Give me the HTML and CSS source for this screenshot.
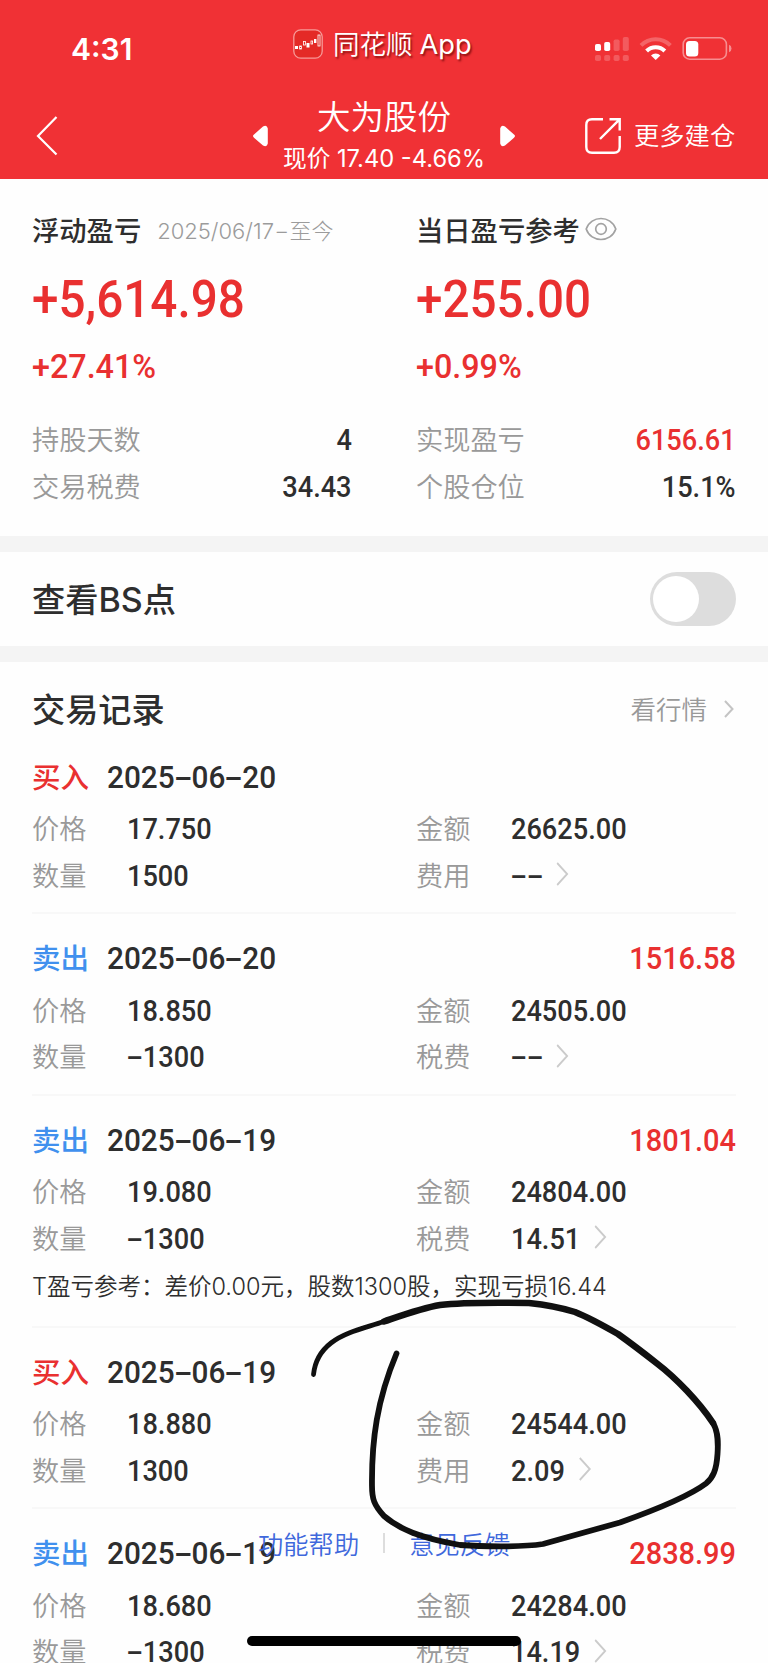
FILE: index.html
```html
<!DOCTYPE html>
<html lang="zh-CN">
<head>
<meta charset="utf-8">
<title>大为股份</title>
<link rel="stylesheet" href="styles.css">
</head>
<body>
<div class="screen">
  <header class="top">
    <div class="status">
      <div class="clock">4:31</div>
      <div class="brand">
        <svg class="brand-icon" viewBox="0 0 30 30"><rect x=".8" y=".8" width="28.4" height="28.4" rx="7" fill="#e42a26" stroke="#f79a98" stroke-width="1.3"/><g fill="#fff"><rect x="2" y="17" width="3" height="3"/><rect x="13.5" y="14" width="3" height="4.5"/><rect x="21" y="10" width="2.4" height="4"/></g><g fill="none" stroke="#fff" stroke-width=".8"><rect x="6.6" y="17" width="1.8" height="3"/><rect x="10.5" y="12.5" width="2" height="3.5"/><rect x="18" y="12" width="1.6" height="3"/><rect x="25" y="6" width="2" height="11"/></g></svg>
        <span>同花顺<span class="latin">App</span></span>
      </div>
      <svg class="signals" viewBox="0 0 138 28"><g fill="#fff"><rect x="0" y="9" width="6" height="7" rx="1.8"/><rect x="9.2" y="7" width="6" height="9" rx="1.8"/><g opacity=".2"><rect x="18.6" y="4.500" width="6" height="11.500" rx="1.800"/><rect x="27.800" y="2" width="6" height="14" rx="1.800"/><rect x="0" y="20" width="6" height="6" rx="1.800"/><rect x="9.200" y="20" width="6" height="6" rx="1.800"/><rect x="18.600" y="20" width="6" height="6" rx="1.800"/><rect x="27.800" y="20" width="6" height="6" rx="1.800"/></g><path d="M60.700 25 L56 20.400 A6.600 6.600 0 0 1 65.400 20.400Z"/></g><g fill="none" stroke="#fff" stroke-width="4"><path d="M51.600 16 A12.800 12.800 0 0 1 69.800 16"/><path d="M46 10.300 A20.600 20.600 0 0 1 75.400 10.300" opacity=".25"/></g><rect x="88.200" y="2.800" width="43.200" height="21.400" rx="6.500" fill="none" stroke="#fff" stroke-opacity=".45" stroke-width="1.600"/><rect x="91" y="6" width="12.300" height="15.500" rx="3.500" fill="#fff"/><path d="M134 9.800 Q136.500 10.500 136.500 13.500 T134 17.300Z" fill="#fff" opacity=".45"/></svg>
    </div>
    <nav class="nav">
      <svg class="back" viewBox="0 0 22 40"><path d="M20.500 1 L2 20 L20.500 38.500" fill="none" stroke="#fff" stroke-width="2.200"/></svg>
      <div class="stock">
        <svg class="tri" viewBox="0 0 16 22"><path d="M2 9.500 L11 1.500 Q15 -.5 15.800 3.500 V18.500 Q15 22.500 11 20.500 L2 12.800 Q0 11 2 9.500Z" fill="#fff"/></svg>
        <div class="stock-text">
          <div class="stock-name">大为股份</div>
          <div class="stock-price">现价 17.40 -4.66%</div>
        </div>
        <svg class="tri" viewBox="0 0 16 22"><path d="M14 9.500 L5 1.500 Q1 -.5 .2 3.500 V18.500 Q1 22.500 5 20.500 L14 12.800 Q16 11 14 9.500Z" fill="#fff"/></svg>
      </div>
      <div class="more">
        <svg viewBox="0 0 36 36"><g fill="none" stroke="#fff" stroke-width="2.400"><path d="M18 1.300 H7 Q1.300 1.300 1.300 7 V29 Q1.300 34.700 7 34.700 H29 Q34.700 34.700 34.700 29 V18"/><path d="M24.500 1.300 H34.700 V12.500 M34.300 1.700 L15 21"/></g></svg>
        <span>更多建仓</span>
      </div>
    </nav>
  </header>

  <section class="summary">
    <div class="card">
      <div class="card-head"><b class="title">浮动盈亏</b><span class="range">2025/06/17<span class="dash">-</span>至今</span></div>
      <div class="big num">+5,614.98</div>
      <div class="pct num">+27.41%</div>
      <div class="stat"><span class="label">持股天数</span><span class="num">4</span></div>
      <div class="stat"><span class="label">交易税费</span><span class="num">34.43</span></div>
    </div>
    <div class="card">
      <div class="card-head"><b class="title">当日盈亏参考</b><svg class="eye" viewBox="0 0 32 24"><path d="M1.200 12 C6 -2 26 -2 30.800 12 C26 26 6 26 1.200 12Z" fill="none" stroke="#a2a2a2" stroke-width="1.700"/><circle cx="16" cy="12" r="5.300" fill="none" stroke="#a2a2a2" stroke-width="1.700"/></svg></div>
      <div class="big num">+255.00</div>
      <div class="pct num">+0.99%</div>
      <div class="stat"><span class="label">实现盈亏</span><span class="num red">6156.61</span></div>
      <div class="stat"><span class="label">个股仓位</span><span class="num">15.1%</span></div>
    </div>
  </section>

  <section class="bs"><span class="heading">查看<span class="latin">BS</span>点</span><span class="switch"><i></i></span></section>

  <section class="records">
    <div class="records-head"><span class="heading">交易记录</span><span class="quote"><span class="label">看行情</span><svg viewBox="0 0 10 18"><path d="M1 1 L8.500 9 L1 17"/></svg></span></div>

    <article class="record">
      <div class="record-head"><span class="side buy">买入</span><span class="num date">2025<i class="dash">-</i>06<i class="dash">-</i>20</span></div>
      <div class="row"><span class="label">价格</span><span class="num">17.750</span><span class="label">金额</span><span class="num">26625.00</span></div>
      <div class="row"><span class="label">数量</span><span class="num">1500</span><span class="label">费用</span><span class="num"><i class="dash">-</i><i class="dash">-</i><svg class="chev" viewBox="0 0 14 24"><path d="M1 1 L12 12 L1 23"/></svg></span></div>
    </article>
    <article class="record">
      <div class="record-head"><span class="side sell">卖出</span><span class="num date">2025<i class="dash">-</i>06<i class="dash">-</i>20</span><span class="num gain">1516.58</span></div>
      <div class="row"><span class="label">价格</span><span class="num">18.850</span><span class="label">金额</span><span class="num">24505.00</span></div>
      <div class="row"><span class="label">数量</span><span class="num"><i class="dash">-</i>1300</span><span class="label">税费</span><span class="num"><i class="dash">-</i><i class="dash">-</i><svg class="chev" viewBox="0 0 14 24"><path d="M1 1 L12 12 L1 23"/></svg></span></div>
    </article>
    <article class="record">
      <div class="record-head"><span class="side sell">卖出</span><span class="num date">2025<i class="dash">-</i>06<i class="dash">-</i>19</span><span class="num gain">1801.04</span></div>
      <div class="row"><span class="label">价格</span><span class="num">19.080</span><span class="label">金额</span><span class="num">24804.00</span></div>
      <div class="row"><span class="label">数量</span><span class="num"><i class="dash">-</i>1300</span><span class="label">税费</span><span class="num">14.51<svg class="chev" viewBox="0 0 14 24"><path d="M1 1 L12 12 L1 23"/></svg></span></div>
      <p class="note">T盈亏参考：差价0.00元，股数1300股，实现亏损16.44</p>
    </article>
    <article class="record">
      <div class="record-head"><span class="side buy">买入</span><span class="num date">2025<i class="dash">-</i>06<i class="dash">-</i>19</span></div>
      <div class="row"><span class="label">价格</span><span class="num">18.880</span><span class="label">金额</span><span class="num">24544.00</span></div>
      <div class="row"><span class="label">数量</span><span class="num">1300</span><span class="label">费用</span><span class="num">2.09<svg class="chev" viewBox="0 0 14 24"><path d="M1 1 L12 12 L1 23"/></svg></span></div>
    </article>
    <article class="record">
      <div class="record-head"><span class="side sell">卖出</span><span class="num date">2025<i class="dash">-</i>06<i class="dash">-</i>19</span><span class="num gain">2838.99</span></div>
      <div class="row"><span class="label">价格</span><span class="num">18.680</span><span class="label">金额</span><span class="num">24284.00</span></div>
      <div class="row"><span class="label">数量</span><span class="num"><i class="dash">-</i>1300</span><span class="label">税费</span><span class="num">14.19<svg class="chev" viewBox="0 0 14 24"><path d="M1 1 L12 12 L1 23"/></svg></span></div>
    </article>
  </section>

  <div class="help"><span>功能帮助</span><i></i><span>意见反馈</span></div>
  <svg class="ink" viewBox="0 0 768 1663"><g fill="none" stroke="#101010" stroke-linecap="round" stroke-linejoin="round"><path stroke-width="4.800" d="M313.500 1374.500 C315 1360 322 1350 331 1343 C345 1332 365 1328 384 1321.500"/><path stroke-width="6.500" d="M384 1321.500 C403 1315 422 1308 440 1305 C465 1302 500 1302.500 529 1303 C548 1305 562 1308 575 1312 C590 1318 604 1326 618 1334 C632 1344 645 1354 657 1363.500 C676 1378 699 1402 713 1423"/><path stroke-width="5.800" d="M713 1423 C719 1433 718 1446 717.500 1454 C716.500 1470 713 1478 706 1483.500 C688 1497 655 1510 620 1522.500 L543 1544 C520 1547.500 480 1546.500 460 1545 C420 1538 399 1529 384 1516 C374 1505 372 1499 372 1486 C371.500 1440 377 1400 396.500 1353.500"/></g></svg>
  <div class="home"></div>
</div>
</body>
</html>
```
FILE: styles.css
```css
* { box-sizing: border-box; }
body { margin: 0; background: #fff; }
.screen {
  position: relative;
  width: 768px;
  height: 1663px;
  overflow: hidden;
  background: #fefefe;
  color: #2e2e2e;
  font-family: Inter, "Noto Sans CJK SC", sans-serif;
  font-weight: 400;
}
svg { display: block; flex: none; }
i { font-style: normal; }

.top { height: 179px; background: #f03135; color: #fff; font-weight: 350; }
.status { display: grid; grid-template-columns: 293px 302px 1fr; height: 94px; align-items: start; }
.clock { padding: 31px 0 0 71px; font-size: 30px; line-height: 36px; font-weight: 600; }
.brand { display: flex; gap: 10px; padding-top: 26px; font-size: 26.500px; line-height: 37px; text-shadow: 1.5px 1.5px 2px rgba(90, 0, 0, .65); white-space: nowrap; }
.brand-icon { width: 30px; height: 30px; margin-top: 3px; }
.brand .latin { margin-left: 7px; font-size: 27.200px; font-weight: 400; }
.signals { width: 138px; height: 28px; margin-top: 35px; }

.nav { display: grid; grid-template-columns: 252px 264px 1fr; height: 85px; }
.back { width: 22px; height: 40px; margin: 22px 0 0 35.500px; }
.stock { display: flex; justify-content: space-between; }
.tri { width: 16px; height: 22px; margin-top: 31px; }
.stock-text { text-align: center; white-space: nowrap; }
.stock-name { font-size: 33.500px; line-height: 46px; }
.stock-price { font-size: 23.700px; line-height: 37px; font-weight: 400; }
.more { display: flex; gap: 13px; padding: 24px 0 0 69px; font-size: 25.300px; line-height: 36px; white-space: nowrap; }
.more svg { width: 36px; height: 36px; }

.num {
  font-family: Roboto, "Noto Sans CJK SC", sans-serif;
  font-weight: 500;
  font-size: 30px;
  color: #2e2e2e;
  white-space: nowrap;
  transform: scaleX(.905);
  transform-origin: left center;
}
.dash { display: inline-block; width: 17.500px; text-align: center; transform: scaleX(1.850); }

.summary { display: grid; grid-template-columns: 352px 320px; column-gap: 32px; padding: 27px 32px 0; height: 357px; }
.card { width: 320px; }
.card-head { display: flex; align-items: center; height: 46px; white-space: nowrap; }
.title { font-size: 27.300px; font-weight: 500; }
.range { margin-left: 16px; padding-bottom: 1px; font-size: 22px; color: #9b9b9b; font-weight: 300; }
.range .dash { width: 15.500px; transform: scaleX(1.500); }
.eye { width: 32px; height: 24px; margin-left: 5px; }
.big { font-size: 51.500px; line-height: 60px; margin-top: 18px; color: #e93030; transform: scaleX(.925); }
.pct { font-size: 34px; line-height: 40px; margin-top: 16px; color: #e93030; transform: scaleX(.950); }
.stat { display: flex; justify-content: space-between; align-items: center; height: 46.500px; font-size: 27.200px; }
.stat .num { transform-origin: right center; }
.pct + .stat { margin-top: 30.500px; }
.label { color: #999; font-weight: 350; padding-bottom: 3px; }
.num.red { color: #e93030; }

.bs { display: flex; justify-content: space-between; align-items: center; height: 126px; padding: 0 32px; border: solid #f4f4f4; border-width: 16px 0; }
.heading { padding-bottom: 4px; font-size: 33.200px; font-weight: 500; color: #2e2e2e; }
.heading .latin { font-size: 34px; font-weight: 450; }
.switch { width: 86px; height: 54px; padding: 4px 3px; border-radius: 27px; background: #ddd; }
.switch i { display: block; width: 46px; height: 46px; border-radius: 50%; background: #fff; }

.records { padding: 0 32px; }
.records-head { display: flex; justify-content: space-between; align-items: center; height: 68.500px; padding-top: 26px; }
.quote { display: flex; align-items: center; gap: 17px; font-size: 25.500px; padding-right: 2px; }
.quote svg { width: 10px; height: 18px; fill: none; stroke: #c4c4c4; stroke-width: 2; }
.record { padding-bottom: 13.500px; border-top: 2px solid #f8f8f8; }
.records-head + .record { border-color: transparent; }
.record-head { display: flex; align-items: center; height: 73px; padding-top: 15px; }
.side { width: 75px; padding-bottom: 3px; font-size: 28.500px; font-weight: 500; }
.side.buy { color: #e93030; }
.side.sell { color: #4090ee; }
.date { font-size: 32px; transform: scaleX(.930); }
.date .dash { width: 18.200px; }
.gain { margin-left: auto; font-size: 32px; color: #e93030; transform-origin: right center; }
.row { display: grid; grid-template-columns: 95px 289px 95px 1fr; align-items: center; height: 46.500px; font-size: 27.200px; }
.row .num { display: flex; align-items: center; }
.chev { width: 14px; height: 24px; margin: 0 0 2px 15px; fill: none; stroke: #cbcbcb; stroke-width: 2; }
.note { margin: 0; height: 50.500px; font-size: 23.500px; line-height: 49px; font-weight: 350; white-space: nowrap; }

.help { position: absolute; left: 258px; top: 1524px; display: flex; align-items: center; gap: 24px; height: 38px; font-size: 25.300px; font-weight: 350; color: #3f68dc; white-space: nowrap; }
.help i { width: 2px; height: 20px; background: #ddd; }
.ink { position: absolute; left: 0; top: 0; width: 768px; height: 1663px; }
.home { position: absolute; left: 247px; top: 1636px; width: 274px; height: 10px; border-radius: 5px; background: #000; }
```
